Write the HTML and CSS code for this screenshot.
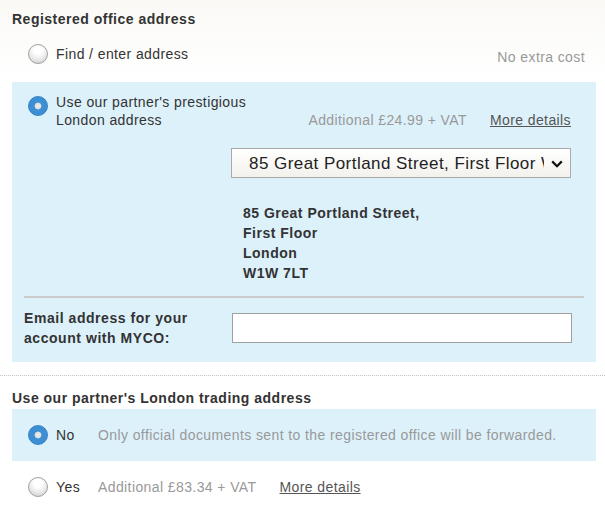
FILE: index.html
```html
<!DOCTYPE html>
<html lang="en">
<head>
<meta charset="utf-8">
<title>Registered office address</title>
<link rel="stylesheet" href="styles.css">
</head>
<body>
<div class="page">
  <h2 class="section-title">Registered office address</h2>
  <div class="option plain">
    <label class="choice"><input type="radio" name="ro"><span>Find / enter address</span></label>
    <span class="note note-right">No extra cost</span>
  </div>

  <div class="panel">
    <div class="option boxed">
      <label class="choice top"><input type="radio" name="ro" checked><span class="label-text">Use our partner's prestigious<br>London address</span></label>
      <span class="note price">Additional £24.99 + VAT</span>
      <a class="more" href="#">More details</a>
    </div>
    <div class="select-row">
      <div class="select-wrap">
        <select class="select">
          <option>85 Great Portland Street, First Floor W1W 7LT</option>
        </select>
        <svg class="chev" width="12" height="8" viewBox="0 0 12 8"><path d="M1.2 1.4 L6 6.2 L10.8 1.4" fill="none" stroke="#111" stroke-width="2.2"/></svg>
      </div>
    </div>
    <div class="address">85 Great Portland Street,<br>First Floor<br>London<br>W1W 7LT</div>
    <hr class="rule">
    <div class="field-row">
      <label class="field-label" for="email">Email address for your<br>account with MYCO:</label>
      <input id="email" type="text" class="text-input">
    </div>
  </div>

  <div class="divider"></div>

  <h2 class="section-title second">Use our partner's London trading address</h2>
  <div class="panel compact">
    <label class="choice"><input type="radio" name="ta" checked><span class="short">No</span></label>
    <span class="note">Only official documents sent to the registered office will be forwarded.</span>
  </div>
  <div class="option plain yes">
    <label class="choice"><input type="radio" name="ta"><span class="short">Yes</span></label>
    <span class="note">Additional £83.34 + VAT</span>
    <a class="more" href="#">More details</a>
  </div>
</div>
</body>
</html>
```
FILE: styles.css
```css
html, body {
  margin: 0;
  padding: 0;
}
body {
  font-family: "Liberation Sans", Arial, sans-serif;
  font-size: 14px;
  letter-spacing: 0.4px;
  color: #333;
  background: linear-gradient(#faf9f6 0, #ffffff 80px) no-repeat;
  background-color: #fff;
}
.page {
  width: 605px;
  padding-bottom: 15px;
}
.section-title {
  margin: 0;
  padding: 9px 12px 0;
  font-size: 14px;
  line-height: 20px;
  font-weight: bold;
  letter-spacing: 0.5px;
  color: #333;
}
.option {
  display: flex;
  align-items: center;
}
.option.plain {
  height: 40px;
  margin-top: 5px;
  padding: 0 20px 0 28px;
}
.choice {
  display: flex;
  align-items: center;
  gap: 8px;
  line-height: 18px;
  color: #333;
  cursor: pointer;
}
.choice.top {
  align-items: flex-start;
}
.choice.top input {
  margin-top: 3px;
}
input[type="radio"] {
  -webkit-appearance: none;
  appearance: none;
  width: 20px;
  height: 20px;
  margin: 0;
  flex: none;
  border-radius: 50%;
  border: 1px solid #a0a0a0;
  background: radial-gradient(circle at 50% 30%, #ffffff 25%, #e8e8e8 60%, #c8c8c8 100%);
  box-sizing: border-box;
}
input[type="radio"]:checked {
  border: 1px solid #3584c8;
  background: radial-gradient(circle at 50% 50%, #f0f0f0 0, #dcdcdc 3px, #3c90d3 3.8px, #3a8dd0 100%);
}
.note {
  color: #999;
  line-height: 18px;
}
.note-right {
  margin-left: auto;
  margin-top: 6px;
}
.panel {
  margin: 8px 9px 0 12px;
  padding: 11px 12px 14px;
  background: #ddf1fb;
}
.option.boxed {
  align-items: flex-end;
  padding: 0 13px 0 4px;
}
.price {
  margin-left: auto;
}
.more {
  margin-left: 23px;
  color: #555;
  text-decoration: underline;
  line-height: 18px;
}
.select-row {
  margin-top: 19px;
  padding-left: 207px;
}
.select-wrap {
  position: relative;
  width: 340px;
  height: 30px;
}
.select {
  -webkit-appearance: none;
  appearance: none;
  width: 340px;
  height: 30px;
  margin: 0;
  box-sizing: border-box;
  padding: 0 26px 0 17px;
  border: 1px solid #aaa;
  border-radius: 0;
  background: linear-gradient(#ffffff, #f3f1ec);
  font-family: "Liberation Sans", Arial, sans-serif;
  font-size: 17px;
  letter-spacing: 0.45px;
  color: #222;
  outline: none;
}
.chev {
  position: absolute;
  right: 8px;
  top: 12px;
  pointer-events: none;
}
.address {
  margin-top: 25px;
  padding-left: 219px;
  line-height: 20px;
  font-weight: bold;
  letter-spacing: 0.5px;
  color: #333;
}
.rule {
  margin: 13px 0 0;
  height: 2px;
  border: 0;
  background: #cbcbcb;
}
.field-row {
  display: grid;
  grid-template-columns: 208px 340px;
  align-items: center;
  margin-top: 10px;
}
.field-label {
  font-weight: bold;
  line-height: 20px;
  letter-spacing: 0.55px;
  color: #333;
}
.text-input {
  width: 340px;
  height: 30px;
  margin: 0;
  box-sizing: border-box;
  border: 1px solid #a0a0a0;
  background: #fff;
  font-family: "Liberation Sans", Arial, sans-serif;
  font-size: 14px;
  padding: 0 6px;
  outline: none;
}
.divider {
  margin-top: 13px;
  border-top: 1px dotted #c4c4c4;
}
.section-title.second {
  padding-top: 12px;
}
.panel.compact {
  margin-top: 1px;
  height: 52px;
  box-sizing: border-box;
  padding: 0 12px 0 16px;
  display: flex;
  align-items: center;
}
.short {
  min-width: 42px;
}
.option.plain.yes {
  margin-top: 6px;
}
```
